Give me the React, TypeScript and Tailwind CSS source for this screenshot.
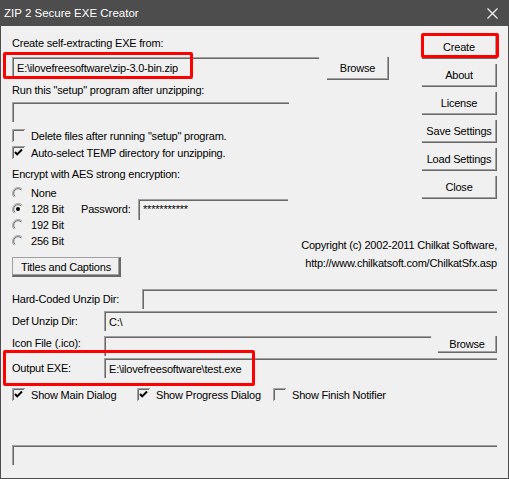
import type { ReactNode } from "react";

function Field({ className = "", children }: { className?: string; children?: ReactNode }) {
  return (
    <div
      className={`h-[20px] border-t border-l border-[#a0a0a0] shadow-[inset_1px_1px_0_#696969] pl-[4px] flex items-center whitespace-nowrap overflow-hidden ${className}`}
    >
      {children}
    </div>
  );
}

function Btn({ className = "", children }: { className?: string; children: ReactNode }) {
  return (
    <div
      className={`flex items-center justify-center border-r border-b border-[#696969] shadow-[inset_-1px_-1px_0_#a0a0a0] whitespace-nowrap ${className}`}
    >
      {children}
    </div>
  );
}

function CheckBox({ checked = false }: { checked?: boolean }) {
  return (
    <svg width="13" height="13" viewBox="0 0 13 13" className="shrink-0">
      <path d="M0.5 13 V0.5 H13" fill="none" stroke="#a0a0a0" />
      <path d="M1.5 12 V1.5 H12" fill="none" stroke="#696969" />
      {checked && <path d="M3 6 L5.2 8.4 L10 3.5" fill="none" stroke="#000" strokeWidth="2" />}
    </svg>
  );
}

function Radio({ checked = false }: { checked?: boolean }) {
  return (
    <svg width="12" height="12" viewBox="0 0 12 12" className="shrink-0">
      <path d="M2.2 10.2 A5.5 5.5 0 0 1 10.2 2.2" fill="none" stroke="#a0a0a0" />
      <path d="M3 9.4 A4.5 4.5 0 0 1 9.4 3" fill="none" stroke="#696969" />
      {checked && <circle cx="6" cy="6" r="2" fill="#000" />}
    </svg>
  );
}

function CheckRow({ checked, label, className = "" }: { checked?: boolean; label: string; className?: string }) {
  return (
    <div className={`h-[17px] flex items-center ${className}`}>
      <CheckBox checked={checked} />
      <span className="ml-[6px] whitespace-nowrap">{label}</span>
    </div>
  );
}

export default function App() {
  return (
    <div className="relative w-[509px] h-[479px] overflow-hidden bg-[#f0f0f0] text-black text-[11px] leading-[14px] tracking-[-0.2px] font-['Liberation_Sans',Arial,sans-serif]">
      {/* title bar */}
      <div className="h-[26px] bg-[#4d4d4d] flex items-center justify-between pl-[4px] pr-[11px] text-white">
        <span className="text-[11.5px] tracking-normal">ZIP 2 Secure EXE Creator</span>
        <svg width="11" height="11" viewBox="0 0 11 11">
          <path d="M0.5 0.5 L10.5 10.5 M10.5 0.5 L0.5 10.5" stroke="#fff" strokeWidth="1.1" />
        </svg>
      </div>

      <div className="h-[453px] border-l border-r border-b border-[#4d4d4d] px-[11px] pt-[10px] flex flex-col">
        <div className="grid grid-cols-[1fr_75px]">
          {/* left column */}
          <div className="col-start-1 row-start-1 row-span-2 flex flex-col">
            <div className="h-[14px]">Create self-extracting EXE from:</div>
            <div className="mt-[7px] flex items-start">
              <Field className="w-[307px]">E:\ilovefreesoftware\zip-3.0-bin.zip</Field>
              <Btn className="ml-[8px] w-[62px] h-[23px]">Browse</Btn>
            </div>
            <div className="mt-[3px] h-[14px]">Run this "setup" program after unzipping:</div>
            <Field className="mt-[5px] w-[277px]" />
            <CheckRow className="mt-[5px]" label={'Delete files after running "setup" program.'} />
            <CheckRow checked label="Auto-select TEMP directory for unzipping." />
            <div className="mt-[6px] h-[14px]">Encrypt with AES strong encryption:</div>
            <div className="mt-[4px] flex flex-col">
              <div className="h-[16px] flex items-center">
                <Radio />
                <span className="ml-[7px]">None</span>
              </div>
              <div className="h-[16px] flex items-center">
                <div className="w-[69px] flex items-center">
                  <Radio checked />
                  <span className="ml-[7px]">128 Bit</span>
                </div>
                <span className="w-[57px]">Password:</span>
                <Field className="w-[150px] h-[21px] shrink-0">
                  <span className="-mt-[2px]">***********</span>
                </Field>
              </div>
              <div className="h-[16px] flex items-center">
                <Radio />
                <span className="ml-[7px]">192 Bit</span>
              </div>
              <div className="h-[16px] flex items-center">
                <Radio />
                <span className="ml-[7px]">256 Bit</span>
              </div>
            </div>
            <Btn className="mt-[8px] w-[109px] h-[20px] border-t border-l border-t-[#a0a0a0] border-l-[#a0a0a0] border-r-2 border-b-2">
              Titles and Captions
            </Btn>
          </div>

          {/* right buttons */}
          <div className="col-start-2 row-start-1 flex flex-col gap-[5px]">
            <Btn className="h-[23px]">Create</Btn>
            <Btn className="h-[23px]">About</Btn>
            <Btn className="h-[23px]">License</Btn>
            <Btn className="h-[23px]">Save Settings</Btn>
            <Btn className="h-[23px]">Load Settings</Btn>
            <Btn className="h-[23px]">Close</Btn>
          </div>

          {/* copyright */}
          <div className="col-start-1 col-span-2 row-start-2 self-end justify-self-end mb-[5px] text-right whitespace-nowrap">
            <div className="h-[18px] leading-[18px]">Copyright (c) 2002-2011 Chilkat Software,</div>
            <div className="h-[18px] leading-[18px]">http://www.chilkatsoft.com/ChilkatSfx.asp</div>
          </div>
        </div>

        {/* lower rows */}
        <div className="mt-[12px] flex items-center">
          <span className="w-[130px] shrink-0">Hard-Coded Unzip Dir:</span>
          <Field className="flex-1" />
        </div>
        <div className="mt-[2px] flex items-center">
          <span className="w-[92px] shrink-0">Def Unzip Dir:</span>
          <Field className="flex-1">C:\</Field>
        </div>
        <div className="mt-[5px] flex items-start">
          <span className="w-[92px] shrink-0">Icon File (.ico):</span>
          <Field className="w-[327px]" />
          <Btn className="ml-[7px] flex-1 h-[17px]">Browse</Btn>
        </div>
        <div className="mt-[2px] flex items-center">
          <span className="w-[92px] shrink-0">Output EXE:</span>
          <Field className="flex-1">E:\ilovefreesoftware\test.exe</Field>
        </div>
        <div className="mt-[8px] flex items-center">
          <CheckRow checked label="Show Main Dialog" className="w-[125px]" />
          <CheckRow checked label="Show Progress Dialog" className="w-[136px]" />
          <CheckRow label="Show Finish Notifier" />
        </div>
        <Field className="mt-[42px] w-full" />
      </div>

      {/* red highlight annotations */}
      <div className="absolute left-[3px] top-[52px] w-[190px] h-[27px] border-[3px] border-[#ff0000] rounded-[2px]" />
      <div className="absolute left-[421px] top-[33px] w-[78px] h-[25px] border-[3px] border-[#ff0000] rounded-[2px]" />
      <div className="absolute left-[3px] top-[350px] w-[252px] h-[36px] border-[3px] border-[#ff0000] rounded-[2px]" />
    </div>
  );
}
